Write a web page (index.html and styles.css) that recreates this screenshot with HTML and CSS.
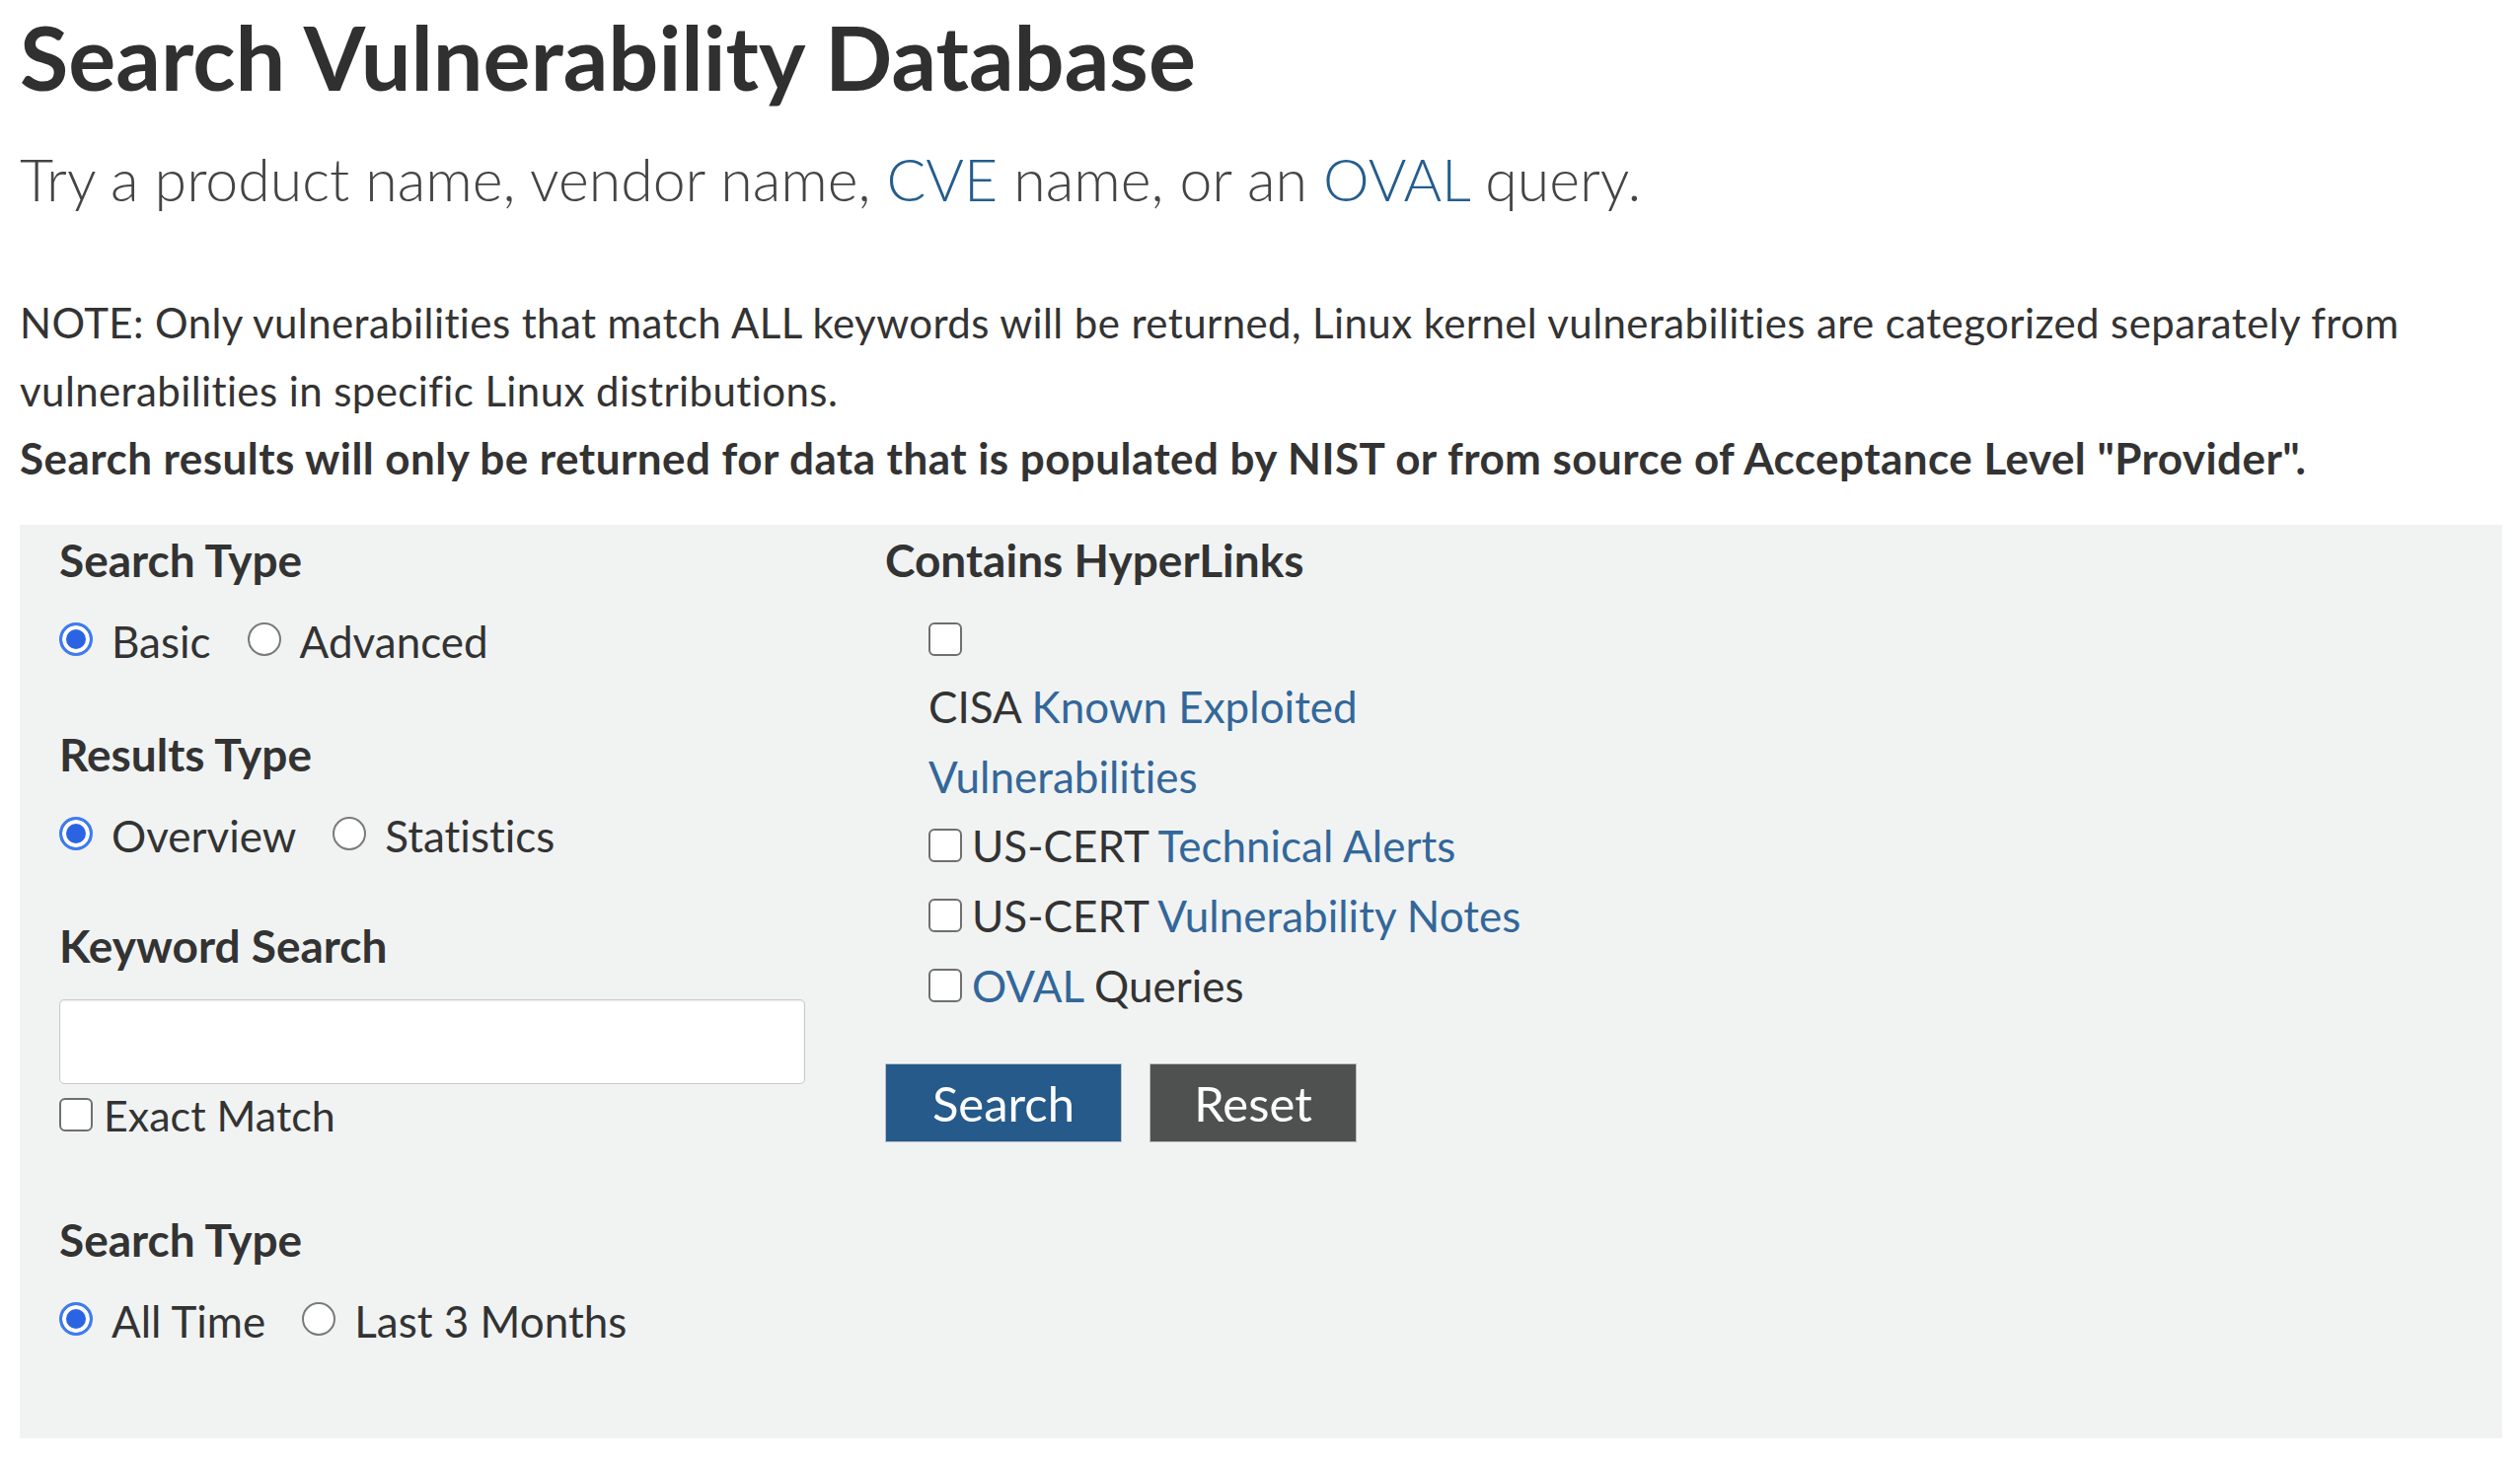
FILE: index.html
```html
<!DOCTYPE html>
<html lang="en">
<head>
<meta charset="utf-8">
<title>Search Vulnerability Database</title>
<link rel="stylesheet" href="styles.css">
</head>
<body>
<div class="page">
  <h1 class="title">Search Vulnerability Database</h1>
  <p class="lead">Try a product name, vendor name, <a href="#">CVE</a> name, or an <a href="#">OVAL</a> query.</p>
  <p class="note">NOTE: Only vulnerabilities that match ALL keywords will be returned, Linux kernel vulnerabilities are categorized separately from vulnerabilities in specific Linux distributions.</p>
  <p class="note-bold">Search results will only be returned for data that is populated by NIST or from source of Acceptance Level "Provider".</p>

  <form class="panel">
    <div class="col-left">
      <div class="group">
        <div class="label">Search Type</div>
        <div class="opts">
          <label class="opt"><input type="radio" name="st" checked><span>Basic</span></label>
          <label class="opt"><input type="radio" name="st"><span>Advanced</span></label>
        </div>
      </div>
      <div class="group g2">
        <div class="label">Results Type</div>
        <div class="opts">
          <label class="opt"><input type="radio" name="rt" checked><span>Overview</span></label>
          <label class="opt"><input type="radio" name="rt"><span>Statistics</span></label>
        </div>
      </div>
      <div class="group g3">
        <div class="label">Keyword Search</div>
        <input class="kw" type="text">
        <label class="exact"><input type="checkbox"><span>Exact Match</span></label>
      </div>
      <div class="group g4">
        <div class="label">Search Type</div>
        <div class="opts">
          <label class="opt"><input type="radio" name="tt" checked><span>All Time</span></label>
          <label class="opt"><input type="radio" name="tt"><span>Last 3 Months</span></label>
        </div>
      </div>
    </div>
    <div class="col-right">
      <div class="label">Contains HyperLinks</div>
      <div class="links">
        <div class="cb-solo"><input type="checkbox"></div>
        <div class="cisa">CISA <a href="#">Known Exploited Vulnerabilities</a></div>
        <label class="chk"><input type="checkbox"><span>US-CERT <a href="#">Technical Alerts</a></span></label>
        <label class="chk"><input type="checkbox"><span>US-CERT <a href="#">Vulnerability Notes</a></span></label>
        <label class="chk"><input type="checkbox"><span><a href="#">OVAL</a> Queries</span></label>
      </div>
      <div class="buttons">
        <button type="button" class="btn btn-search">Search</button>
        <button type="button" class="btn btn-reset">Reset</button>
      </div>
    </div>
  </form>
</div>
</body>
</html>
```
FILE: styles.css
```css
html, body {
  margin: 0;
  padding: 0;
  background: #fff;
}
body {
  font-family: "Lato", "Liberation Sans", sans-serif;
  color: #333;
  font-variant-ligatures: none;
}
.page {
  padding: 0 18px 0 20px;
}
a {
  color: #33679a;
  text-decoration: none;
}
.title {
  margin: 0;
  padding-top: 2px;
  font-size: 90px;
  line-height: 110px;
  font-weight: 700;
  color: #303030;
}
.lead {
  margin: 20px 0 0;
  font-size: 59px;
  line-height: 100px;
  font-weight: 300;
  color: #444;
}
.lead a {
  color: #245d8e;
}
.note, .note-bold {
  margin: 0;
}
.note {
  margin-top: 61px;
  font-size: 42px;
  line-height: 69px;
  letter-spacing: 0.4px;
}
.note-bold {
  font-size: 44px;
  font-weight: 700;
  line-height: 67px;
  letter-spacing: 0.45px;
}
.panel {
  margin-top: 34px;
  background: #f1f3f3;
  display: grid;
  grid-template-columns: 837px 1fr;
  padding: 8px 0 89px 40px;
}
.label {
  font-size: 46px;
  line-height: 56px;
  font-weight: 700;
  color: #333;
}
.opts {
  display: flex;
  align-items: center;
  margin-top: 24px;
  height: 60px;
}
.opt {
  display: flex;
  align-items: center;
  font-size: 44px;
  line-height: 60px;
  margin-right: 37px;
}
.opt span {
  margin-left: 19px;
}
input[type="radio"] {
  appearance: none;
  -webkit-appearance: none;
  margin: 0;
  width: 34px;
  height: 34px;
  border-radius: 50%;
  border: 2px solid #7a7a7a;
  background: #fff;
  flex: none;
  box-sizing: border-box;
  margin-top: -4px;
}
input[type="radio"]:checked {
  border: 3px solid #3e7bf0;
  background: #2b64e3;
  box-shadow: inset 0 0 0 4px #fff;
}
input[type="checkbox"] {
  appearance: none;
  -webkit-appearance: none;
  margin: 0;
  width: 34px;
  height: 34px;
  border-radius: 6px;
  border: 2px solid #6f6f6f;
  background: #fff;
  box-sizing: border-box;
  flex: none;
}
.g2 {
  margin-top: 57px;
}
.g3 {
  margin-top: 54px;
}
.kw {
  display: block;
  box-sizing: border-box;
  width: 756px;
  height: 86px;
  margin-top: 26px;
  border: 1px solid #c9c9c9;
  border-radius: 5px;
  background: #fff;
  box-shadow: inset 0 1px 2px rgba(0,0,0,0.08);
}
.exact {
  display: flex;
  align-items: center;
  margin-top: 7px;
  height: 50px;
  font-size: 43px;
  line-height: 50px;
}
.exact input {
  margin-top: -2px;
}
.exact span {
  margin-left: 11px;
}
.g4 {
  margin-top: 73px;
}
.links {
  padding-left: 44px;
}
.cb-solo {
  height: 34px;
  margin-top: 35px;
  margin-bottom: 16px;
}
.cb-solo input {
  display: block;
}
.cisa {
  width: 560px;
  font-size: 44px;
  line-height: 71px;
  margin-bottom: -1px;
}
.chk {
  display: flex;
  align-items: center;
  font-size: 44px;
  line-height: 71px;
}
.chk input {
  margin-top: -2px;
}
.chk span {
  margin-left: 10px;
}
.buttons {
  display: flex;
  gap: 28px;
  margin-top: 43px;
}
.btn {
  font-family: "Lato", "Liberation Sans", sans-serif;
  font-size: 49px;
  color: #fff;
  height: 80px;
  border: 1px solid #b9c3cc;
  padding: 0;
  cursor: pointer;
}
.btn-search {
  width: 240px;
  background: #255a8a;
}
.btn-reset {
  width: 210px;
  background: #4f5150;
  border-color: #bcbcbc;
}
```
